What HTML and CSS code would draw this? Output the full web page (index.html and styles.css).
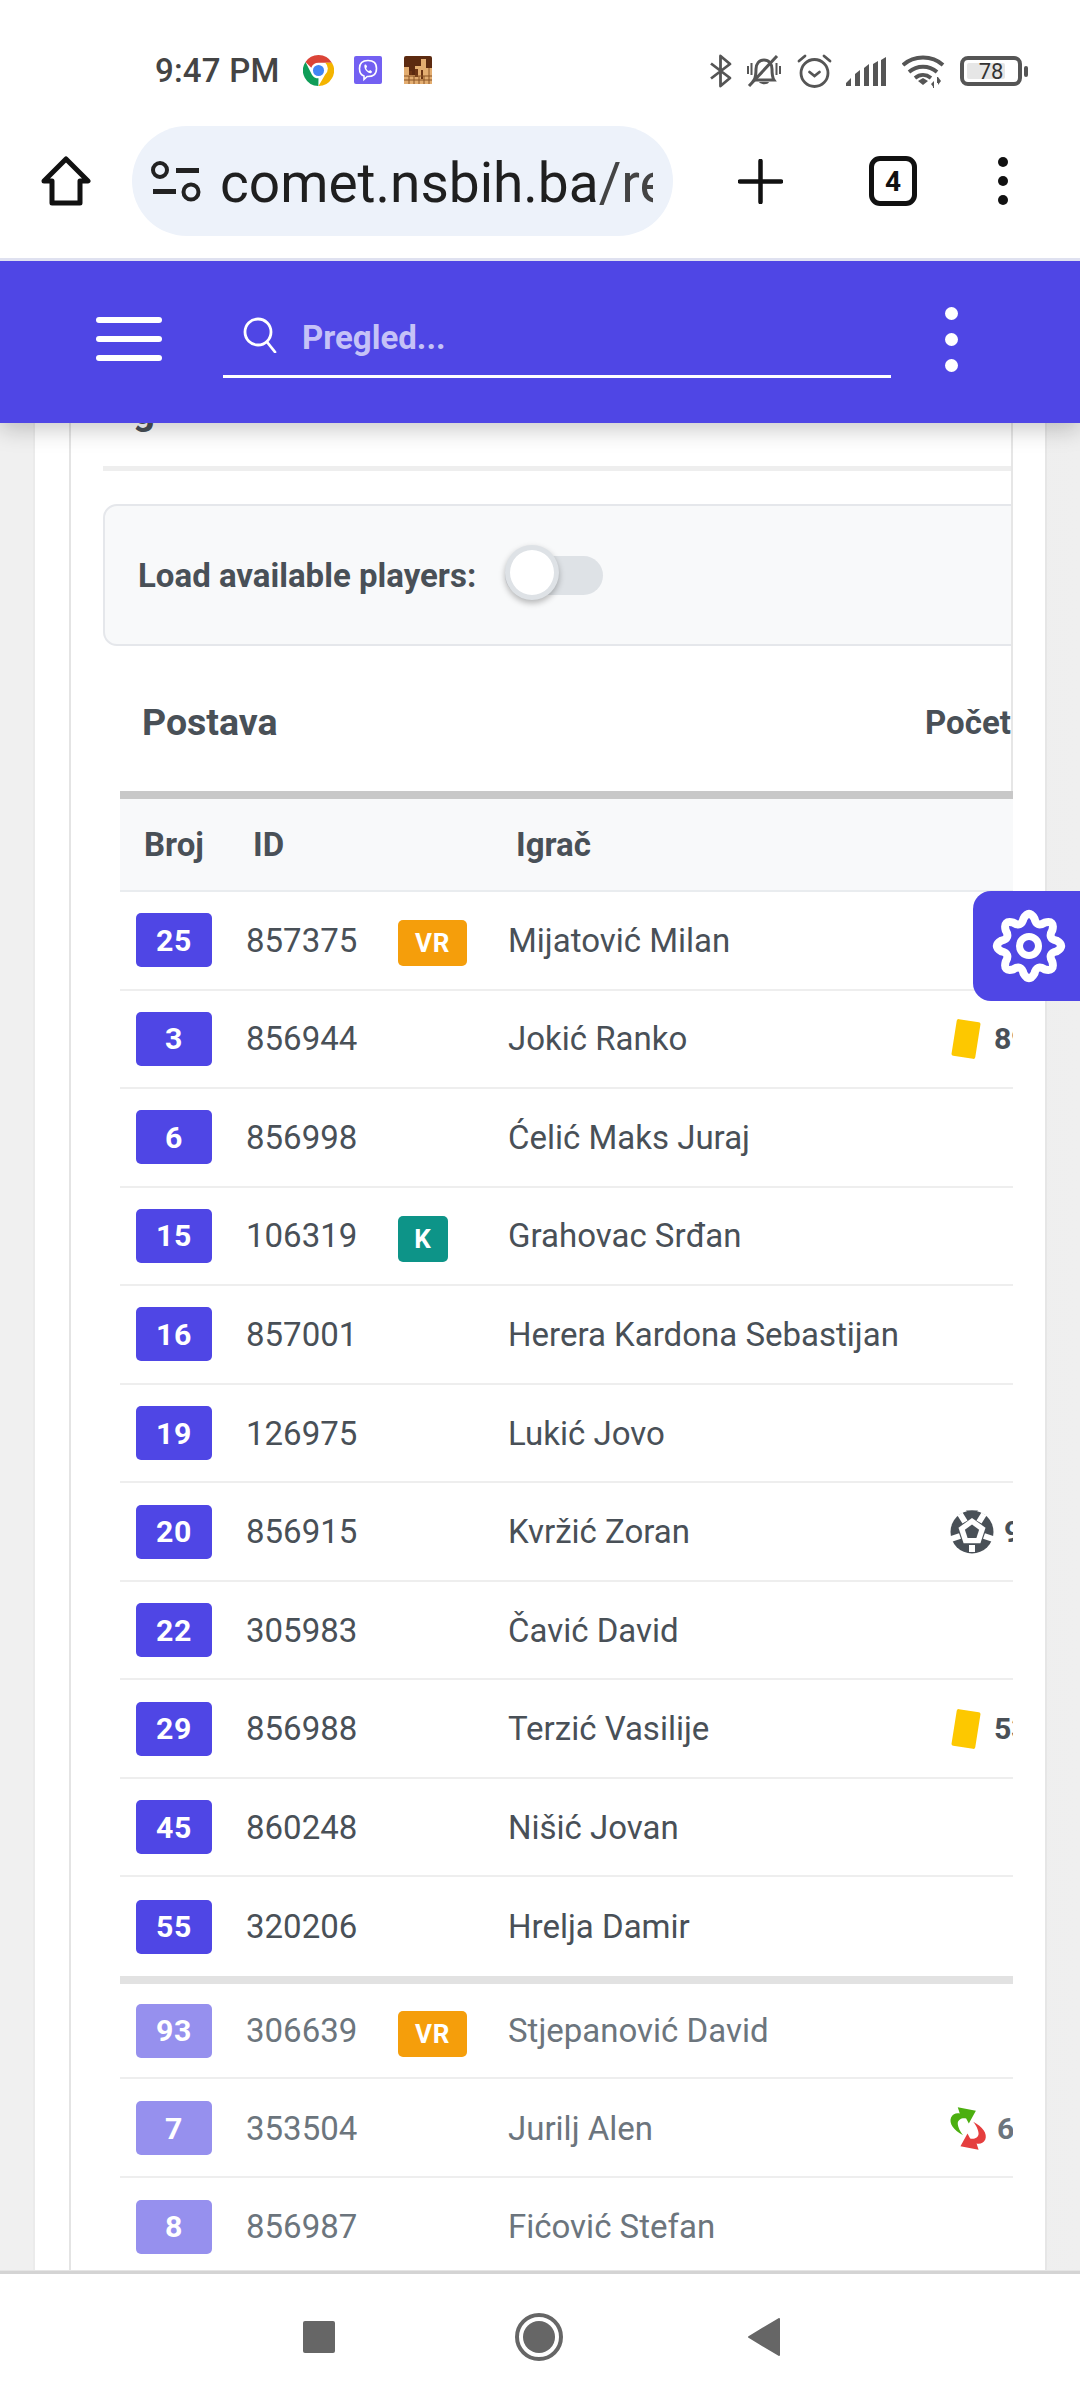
FILE: index.html
```html
<!DOCTYPE html>
<html lang="bs">
<head>
<meta charset="utf-8">
<title>Postava</title>
<link rel="stylesheet" href="styles.css">
</head>
<body>
<div class="phone">
  <div class="status">
    <div class="status-left">
      <span class="time">9:47 PM</span>
      <svg class="ic-chrome" viewBox="0 0 48 48" width="31" height="31">
        <path fill="#db4437" d="M24 0a24 24 0 0 1 20.8 12H24a12 12 0 0 0-11.2 7.6L3.9 10.8A24 24 0 0 1 24 0z"/>
        <path fill="#f4b400" d="M44.8 12A24 24 0 0 1 24 48l10.4-18A12 12 0 0 0 34.4 12z"/>
        <path fill="#0f9d58" d="M3.9 10.8 13.6 30A12 12 0 0 0 24 36l-.2 12A24 24 0 0 1 3.9 10.8z"/>
        <circle cx="24" cy="24" r="11" fill="#fff"/>
        <circle cx="24" cy="24" r="8.6" fill="#4285f4"/>
      </svg>
      <svg class="ic-app" viewBox="0 0 28 28" width="28" height="28">
        <rect width="28" height="28" rx="2" fill="#7360f2"/>
        <path fill="none" stroke="#fff" stroke-width="1.6" d="M14 4.500c-5.500 0-8.500 2-8.500 8 0 4 1.300 6.500 4.500 7.500v3.500l3.200-3c5.800.3 9.300-2 9.300-8 0-6-3-8-8.500-8z"/>
        <path fill="#fff" d="M10.500 9c1-.8 1.700-.4 2.300 1l.3.900-1 1c.4 1.500 1.500 2.700 3 3.200l1-1 1.400.8c.8.7.5 1.500-.6 2.300-3 .5-7.500-4.500-6.400-8.200z"/>
      </svg>
      <svg class="ic-app" viewBox="0 0 28 28" width="28" height="28">
        <rect width="28" height="28" rx="2" fill="#5c2a10"/>
        <path fill="#e3ad70" d="M17 3h5v9h6v16H0V11h5v4h3v4h3v-9h6z"/>
        <path fill="#6b3414" d="M11 13h3v8h-3zM17 14h2v9h-2zM5 15h3v4H5z"/>
        <path stroke="#8a5526" stroke-width="1" fill="none" d="M0 20h28M0 24h28M5 20v8M10 20v8M15 20v8M20 20v8M25 12v16"/>
      </svg>
    </div>
    <div class="status-right">
      <svg class="ic-bt" viewBox="0 0 22 34" width="22" height="34"><path fill="none" stroke="#555" stroke-width="2.800" stroke-linejoin="round" d="M1 9.500 20 24 10.500 32V2L20 10 1 24.500"/></svg>
      <svg class="ic-mute" viewBox="0 0 34 32" width="34" height="32"><g fill="none" stroke="#555" stroke-width="3"><path d="M7 25c2-3 2-5 2-11 0-5 3-9 8-9s8 4 8 9c0 6 0 8 2 11z"/><path d="M1 11v8M4.500 8v12M33 11v8M29.500 8v12" stroke-width="2"/><path d="M2 31 30 1"/></g><path fill="#555" d="M12 27h10c-1 3-8 3-10 0z"/></svg>
      <svg class="ic-alarm" viewBox="0 0 35 34" width="35" height="34"><g fill="none" stroke="#555" stroke-width="2.800" stroke-linecap="round"><circle cx="17.500" cy="19" r="13.500"/><path d="M2 7 8 2M33 7l-6-5M12.500 18l5 4 5-4"/></g></svg>
      <svg class="ic-signal" viewBox="0 0 40 29" width="40" height="29"><g fill="#555"><path d="M0 29v-3l5-5v8zM9 29V17l5-4v16zM18 29V11l5-4v22zM27 29V7l5-3v25zM35 29V3l5-3v29z"/></g></svg>
      <svg class="ic-wifi" viewBox="0 0 44 33" width="44" height="33"><g fill="none" stroke="#555" stroke-width="3.800"><path d="M1 10C12 0 30 0 41 10"/><path d="M7 17c8-7 20-7 28 0"/><path d="M13 23c5-4 11-4 16 0"/></g><path fill="#555" d="M21 23l-5 3 5 4 5-4zM32 33v-7l-3 3zM36 22v8l3-4zM32 29h-1v4h1zM36 22h-1v6h1z"/></svg>
      <div class="battery"><span class="battery-fill"></span><span class="battery-num">78</span></div>
      <span class="battery-nub"></span>
    </div>
  </div>

  <div class="toolbar">
    <svg class="ic-home" viewBox="0 0 50 50" width="50" height="50"><path fill="none" stroke="#111" stroke-width="5" stroke-linejoin="round" d="M25 3 47 25H39V47H11V25H3z"/></svg>
    <div class="urlbar">
      <svg class="ic-tune" viewBox="0 0 52 44" width="52" height="44"><g fill="none" stroke="#222" stroke-width="4"><circle cx="9" cy="11" r="7"/><circle cx="40" cy="33" r="7.500"/></g><path fill="#222" d="M25 9h23v5H25zM2 30h23v5H2z"/></svg>
      <span class="url">comet.nsbih.ba<span class="url-path">/re</span></span>
    </div>
    <svg class="ic-plus" viewBox="0 0 45 45" width="45" height="45"><path fill="none" stroke="#111" stroke-width="4.500" stroke-linecap="round" d="M22.500 2v41M2 22.500h41"/></svg>
    <div class="tabs">4</div>
    <div class="menu-dots"><i></i><i></i><i></i></div>
  </div>

  <div class="viewport">
    <header class="appbar">
      <div class="burger"><i></i><i></i><i></i></div>
      <div class="search">
        <svg viewBox="0 0 34 36" width="34" height="36"><g fill="none" stroke="#fff" stroke-width="2.800" stroke-linecap="round"><circle cx="15" cy="15" r="13"/><path d="M24 25l8 10"/></g></svg>
        <span>Pregled...</span>
      </div>
      <div class="appbar-dots"><i></i><i></i><i></i></div>
    </header>

    <div class="card">
      <div class="panel">
        <div class="upper">
          <div class="heading">g</div>
          <div class="divider"></div>
          <div class="loadbox">
            <span class="loadlabel">Load available players:</span>
            <span class="toggle"><span class="thumb"></span></span>
          </div>
          <div class="title-row">
            <span class="title">Postava</span>
            <span class="subtitle">Početna</span>
          </div>
        </div>

        <div class="table">
          <div class="thead"><span>Broj</span><span>ID</span><span>Igrač</span></div>

          <div class="row"><span class="num">25</span><span>857375</span><span class="role vr">VR</span><span>Mijatović Milan</span><span class="ev"></span></div>
          <div class="row"><span class="num">3</span><span>856944</span><span></span><span>Jokić Ranko</span><span class="ev"><svg class="card-y" viewBox="0 0 30 40" width="30" height="40"><rect x="3" y="1.500" width="24" height="37" rx="2" fill="#fdc800" transform="rotate(9 15 20)"/></svg><b>89</b></span></div>
          <div class="row"><span class="num">6</span><span>856998</span><span></span><span>Ćelić Maks Juraj</span><span class="ev"></span></div>
          <div class="row"><span class="num">15</span><span>106319</span><span class="role k">K</span><span>Grahovac Srđan</span><span class="ev"></span></div>
          <div class="row"><span class="num">16</span><span>857001</span><span></span><span>Herera Kardona Sebastijan</span><span class="ev"></span></div>
          <div class="row"><span class="num">19</span><span>126975</span><span></span><span>Lukić Jovo</span><span class="ev"></span></div>
          <div class="row"><span class="num">20</span><span>856915</span><span></span><span>Kvržić Zoran</span><span class="ev"><svg class="ball" viewBox="-22 -22 44 44" width="44" height="44"><circle r="21.500" fill="#495057"/><g stroke="#fff" stroke-width="6"><path d="M-7 -10-12-18M7 -10 12-18M12 4 21 7M-12 4-21 7M0 13V20"/></g><path fill="#fff" d="M0-14 13.500-4.300 8.400 11.300H-8.400L-13.500-4.300z"/><path fill="#495057" d="M0-7.500 7.100-2.300 4.400 6H-4.400L-7.100-2.300z"/><path fill="#495057" d="M-6-21.500H6L3-18.500H-3z"/></svg><b class="ev-ball">90</b></span></div>
          <div class="row"><span class="num">22</span><span>305983</span><span></span><span>Čavić David</span><span class="ev"></span></div>
          <div class="row"><span class="num">29</span><span>856988</span><span></span><span>Terzić Vasilije</span><span class="ev"><svg class="card-y" viewBox="0 0 30 40" width="30" height="40"><rect x="3" y="1.500" width="24" height="37" rx="2" fill="#fdc800" transform="rotate(9 15 20)"/></svg><b>53</b></span></div>
          <div class="row"><span class="num">45</span><span>860248</span><span></span><span>Nišić Jovan</span><span class="ev"></span></div>
          <div class="row row-last"><span class="num">55</span><span>320206</span><span></span><span>Hrelja Damir</span><span class="ev"></span></div>

          <div class="bench">
            <div class="row row-first"><span class="num">93</span><span>306639</span><span class="role vr">VR</span><span>Stjepanović David</span><span class="ev"></span></div>
            <div class="row"><span class="num">7</span><span>353504</span><span></span><span>Jurilj Alen</span><span class="ev"><svg class="swap" viewBox="140 75 125 140" width="42" height="47"><path fill="#4caf10" d="M188 165C160 150 145 130 152 112 158 100 168 98 178 100L172 82 226 92 205 130 197 115C185 112 172 118 172 130 172 140 180 155 188 165Z"/><path fill="#e53e3e" d="M218 125C246 140 261 160 254 178 248 190 238 192 228 190L234 208 180 198 201 160 209 175C221 178 234 172 234 160 234 150 226 135 218 125Z"/></svg><b class="ev-swap">67</b></span></div>
            <div class="row"><span class="num">8</span><span>856987</span><span></span><span>Fićović Stefan</span><span class="ev"></span></div>
          </div>
        </div>
      </div>
    </div>

    <button class="gear" aria-label="Postavke">
      <svg viewBox="-40 -40 80 80" width="80" height="80"><path fill="none" stroke="#fff" stroke-width="8" stroke-linejoin="round" d="M27.460-5.460Q37 0 27.460 5.460Q18.480 7.650 23.280 15.560Q26.160 26.160 15.560 23.280Q7.650 18.480 5.460 27.460Q0 37-5.460 27.460Q-7.650 18.480-15.560 23.280Q-26.160 26.160-23.280 15.560Q-18.480 7.650-27.460 5.460Q-37 0-27.460-5.460Q-18.480-7.650-23.280-15.560Q-26.160-26.160-15.560-23.280Q-7.650-18.480-5.460-27.460Q0-37 5.460-27.460Q7.650-18.480 15.560-23.280Q26.160-26.160 23.280-15.560Q18.480-7.650 27.460-5.460Z"/><circle r="9.500" fill="none" stroke="#fff" stroke-width="7"/></svg>
    </button>
  </div>

  <nav class="navbar">
    <span class="nav-square"></span>
    <svg class="nav-home" viewBox="0 0 48 48" width="48" height="48"><circle cx="24" cy="24" r="22" fill="none" stroke="#666" stroke-width="4"/><circle cx="24" cy="24" r="16" fill="#666"/></svg>
    <svg class="nav-back" viewBox="0 0 32 38" width="32" height="38"><path fill="#666" stroke="#666" stroke-width="2" stroke-linejoin="round" d="M31 1V37L1 19z"/></svg>
  </nav>
</div>
</body>
</html>
```
FILE: styles.css
```css
* { box-sizing: border-box; }
html, body { margin: 0; padding: 0; }
body { width: 1080px; height: 2400px; overflow: hidden; background: #fff; font-family: Roboto, "Liberation Sans", sans-serif; }
.phone { display: flex; flex-direction: column; width: 1080px; height: 2400px; }

/* status bar */
.status { height: 104px; display: flex; justify-content: space-between; align-items: flex-start; padding-top: 53px; flex: none; }
.status-left { display: flex; align-items: center; padding-left: 155px; height: 34px; }
.time { font-size: 33px; font-weight: 500; color: #444; width: 148px; letter-spacing: .2px; }
.ic-chrome { margin-right: 20px; }
.ic-app { margin-right: 22px; }
.status-right { display: flex; align-items: center; height: 36px; padding-right: 52px; }
.ic-bt { margin-right: 15px; }
.ic-mute { margin-right: 16px; }
.ic-alarm { margin-right: 14px; }
.ic-signal { margin-right: 16px; }
.ic-wifi { margin-right: 14px; }
.battery { position: relative; width: 62px; height: 30px; border: 4px solid #555; border-radius: 8px; display: flex; align-items: center; justify-content: center; }
.battery-fill { position: absolute; left: 3px; top: 3px; bottom: 3px; width: 38px; background: #e6e6e6; border-radius: 2px; }
.battery-num { position: relative; font-size: 22px; color: #333; }
.battery-nub { width: 4px; height: 11px; background: #555; border-radius: 2px; margin-left: 2px; }

/* browser toolbar */
.toolbar { height: 154px; display: flex; align-items: center; padding-left: 41px; flex: none; }
.urlbar { margin-left: 41px; width: 541px; height: 110px; border-radius: 55px; background: #edf2fa; display: flex; align-items: center; padding-left: 19px; }
.url { margin-left: 17px; width: 433px; padding-top: 4px; overflow: hidden; white-space: nowrap; font-size: 55px; color: #1f1f1f; }
.url-path { color: #444; }
.ic-plus { margin-left: 65px; }
.tabs { margin-left: 86px; width: 48px; height: 50px; border: 5px solid #111; border-radius: 11px; font-size: 28px; font-weight: 700; color: #111; display: flex; align-items: center; justify-content: center; }
.menu-dots { margin-left: 81px; display: flex; flex-direction: column; gap: 9px; }
.menu-dots i { width: 10px; height: 10px; border-radius: 50%; background: #111; display: block; }

/* viewport */
.viewport { position: relative; flex: 1; min-height: 0; overflow: hidden; background: linear-gradient(90deg, #f0f0f0 0 50%, #e9e9e9 50%, #efefef 100%); border-top: 3px solid #dfe1f0; }
.appbar { position: absolute; z-index: 3; left: 0; right: 0; top: 0; height: 162px; background: #4f46e5; box-shadow: 0 6px 22px rgba(0,0,0,.22); display: flex; align-items: flex-start; padding: 56px 0 0 96px; }
.burger { width: 66px; display: flex; flex-direction: column; gap: 13px; }
.burger i { display: block; height: 6px; border-radius: 3px; background: #fff; }
.search { margin-left: 61px; width: 668px; height: 61px; border-bottom: 3px solid #fff; display: flex; align-items: flex-start; padding-left: 20px; }
.search svg { flex: none; }
.search span { margin-left: 25px; font-size: 33px; font-weight: 700; color: #c5c2f7; line-height: 42px; }
.appbar-dots { margin-left: 54px; margin-top: -10px; display: flex; flex-direction: column; gap: 13px; }
.appbar-dots i { display: block; width: 13px; height: 13px; border-radius: 50%; background: #fff; }

.card { margin: 0 33px 0 33px; height: 100%; background: #fff; border-left: 2px solid #ebebeb; border-right: 2px solid #e6e6e6; padding-left: 34px; }
.panel { height: 100%; border-left: 2px solid #e4e4e4; padding-left: 32px; padding-right: 32px; }
.upper { border-right: 2px solid #e6e6e6; overflow: hidden; }
.heading { height: 205px; padding: 128px 0 33px 30px; font-size: 38.5px; font-weight: 700; line-height: 44px; color: #495057; }
.divider { height: 5px; background: #eeeeee; }
.loadbox { margin-top: 33px; width: 1100px; height: 142px; background: #f8f9fa; border: 2px solid #e5e7eb; border-radius: 14px; display: flex; align-items: center; padding-left: 33px; color: #495057; }
.loadlabel { font-size: 33px; font-weight: 700; white-space: nowrap; }
.toggle { position: relative; margin-left: 29px; width: 98px; height: 39px; background: #dee2e6; border-radius: 20px; flex: none; }
.thumb { position: absolute; left: 0; top: -11px; width: 54px; height: 55px; border-radius: 50%; background: #fff; border: 5px solid #dee2e6; box-shadow: 0 3px 6px rgba(0,0,0,.28); }
.title-row { height: 145px; display: flex; align-items: center; padding: 7px 0 0 39px; white-space: nowrap; color: #495057; font-weight: 700; }
.title { width: 783px; flex: none; font-size: 37.5px; }
.subtitle { font-size: 33px; }

/* table */
.table { margin-left: 17px; width: 893px; overflow: hidden; border-top: 8px solid #c8c8c8; color: #495057; font-size: 33px; }
.thead { height: 93px; background: #f8f9fa; border-bottom: 2px solid #e9ecef; display: grid; grid-template-columns: 109px 263px 1fr; align-items: center; padding-left: 24px; font-weight: 700; }
.row { width: 1100px; height: 98.55px; border-bottom: 2px solid #eeeeee; display: grid; grid-template-columns: 110px 152px 110px 442px 1fr; align-items: center; padding-left: 16px; white-space: nowrap; }
.row-last { border-bottom: 0; }
.num { width: 76px; height: 54px; border-radius: 5px; background: #4f46e5; color: #fff; font-weight: 700; font-size: 30.25px; letter-spacing: .7px; display: flex; align-items: center; justify-content: center; }
.role { height: 46px; margin-top: 6px; border-radius: 5px; color: #fff; font-weight: 700; font-size: 26px; letter-spacing: .8px; display: flex; align-items: center; justify-content: center; }
.vr { width: 69px; background: #f59e0b; }
.k { width: 50px; background: #0d9488; }
.ev { display: flex; align-items: center; font-weight: 700; }
.card-y { margin-left: 1px; }
.ev b { margin-left: 13px; font-weight: 700; font-size: 30.25px; }
.ball { margin-left: 0; }
.ev b.ev-ball { margin-left: 10px; }
.swap { margin-left: -3px; }
.ev b.ev-swap { margin-left: 8px; }
.bench { border-top: 8px solid #e2e2e2; color: #6c757d; }
.bench .num { background: #9690ee; }
.bench .row { padding-top: 2px; }
.bench .row-first { height: 95px; padding-top: 0; }
.gear { position: absolute; z-index: 2; right: 0; top: 630px; width: 107px; height: 110px; padding: 0 0 0 16px; border: 0; border-radius: 18px 0 0 18px; background: #4f46e5; display: flex; align-items: center; }

/* nav bar */
.navbar { height: 129px; flex: none; background: #fff; border-top: 3px solid #d4d4d4; box-shadow: 0 -1px 0 #e5e5e5; position: relative; display: flex; align-items: center; padding-left: 303px; }
.nav-square { width: 32px; height: 32px; background: #666; border-radius: 2px; margin-right: 180px; }
.nav-home { margin-right: 185px; }
```
